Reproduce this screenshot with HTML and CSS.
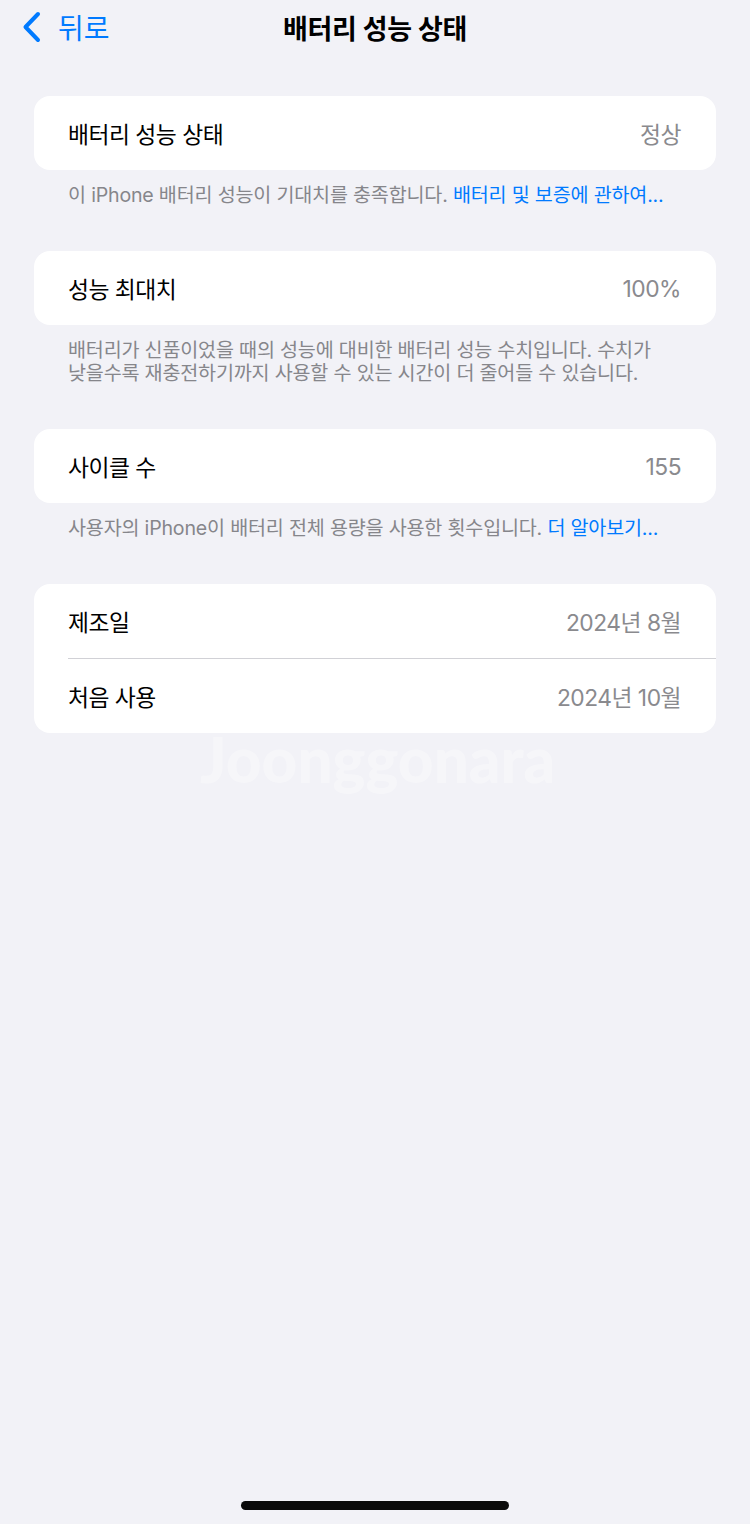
FILE: index.html
```html
<!DOCTYPE html>
<html lang="ko">
	<head>
		<meta charset="utf-8" />
		<title>배터리 성능 상태</title>
		<link rel="stylesheet" href="styles.css">
	</head>
	<body>
		<div class="screen">
			<header class="navbar">
				<a class="back" href="#">
					<svg class="chevron" width="20" height="32" viewBox="0 0 20 32">
						<path d="M17 3 L4.5 16 L17 29" fill="none" stroke="currentColor" stroke-width="4" stroke-linecap="round" stroke-linejoin="round" />
					</svg>
					<span>뒤로</span>
				</a>
				<h1 class="title">배터리 성능 상태</h1>
				<span></span>
			</header>

			<main class="content">
				<section class="group">
					<div class="card">
						<div class="row">
							<span class="label">배터리 성능 상태</span>
							<span class="value">정상</span>
						</div>
					</div>
					<p class="footer">이 iPhone 배터리 성능이 기대치를 충족합니다. <a href="#">배터리 및 보증에 관하여...</a></p>
				</section>

				<section class="group">
					<div class="card">
						<div class="row">
							<span class="label">성능 최대치</span>
							<span class="value">100%</span>
						</div>
					</div>
					<p class="footer">배터리가 신품이었을 때의 성능에 대비한 배터리 성능 수치입니다. 수치가<br>낮을수록 재충전하기까지 사용할 수 있는 시간이 더 줄어들 수 있습니다.</p>
				</section>

				<section class="group">
					<div class="card">
						<div class="row">
							<span class="label">사이클 수</span>
							<span class="value">155</span>
						</div>
					</div>
					<p class="footer">사용자의 iPhone이 배터리 전체 용량을 사용한 횟수입니다. <a href="#">더 알아보기...</a></p>
				</section>

				<section class="group">
					<div class="card">
						<div class="row">
							<span class="label">제조일</span>
							<span class="value">2024년 8월</span>
						</div>
						<div class="row">
							<span class="label">처음 사용</span>
							<span class="value">2024년 10월</span>
						</div>
					</div>
				</section>
			</main>

			<div class="watermark">Joonggonara</div>
			<div class="home-indicator"></div>
		</div>
	</body>
</html>
```

FILE: styles.css
```css
body {
	margin:0;
	background:#f2f2f7;
	font-family:"Inter", "Noto Sans CJK KR", sans-serif;
	-webkit-font-smoothing:antialiased;
}
.screen {
	position:relative;
	width:750px;
	height:1524px;
	overflow:hidden;
}

/* top navigation */
.navbar {
	display:grid;
	grid-template-columns:1fr auto 1fr;
	align-items:center;
	height:54px;
}
.back {
	display:flex;
	align-items:center;
	gap:17px;
	padding-left:21px;
	color:#007aff;
	text-decoration:none;
	font-size:28px;
}
.chevron {
	display:block;
}
.title {
	margin:0;
	font-size:27px;
	font-weight:700;
	color:#000;
	letter-spacing:-0.3px;
}

/* grouped list */
.content {
	padding:42px 34px 0;
}
.group {
	margin-bottom:44px;
}
.card {
	background:#fff;
	border-radius:16px;
	overflow:hidden;
}
.row {
	display:flex;
	justify-content:space-between;
	align-items:center;
	height:74px;
	padding:0 35px 0 34px;
	font-size:22.8px;
	letter-spacing:-0.5px;
}
.row + .row {
	height:75px;
	box-sizing:border-box;
	border-top:1px solid #d1d1d6;
	margin-left:34px;
	padding-left:0;
}
.label {
	color:#000;
}
.value {
	color:#8a8a8e;
}
.footer {
	margin:0;
	padding:14px 34px 0;
	font-size:19.6px;
	line-height:23px;
	color:#86868b;
	letter-spacing:-0.2px;
}
.footer a {
	color:#007aff;
	text-decoration:none;
}

/* faint mark over the page */
.watermark {
	position:absolute;
	left:200px;
	top:722px;
	font-family:"Lato", sans-serif;
	font-weight:900;
	font-size:62px;
	color:#fff;
	opacity:0.35;
	pointer-events:none;
}

.home-indicator {
	position:absolute;
	left:241px;
	bottom:14px;
	width:268px;
	height:9px;
	border-radius:5px;
	background:#0a0a0a;
}
```
